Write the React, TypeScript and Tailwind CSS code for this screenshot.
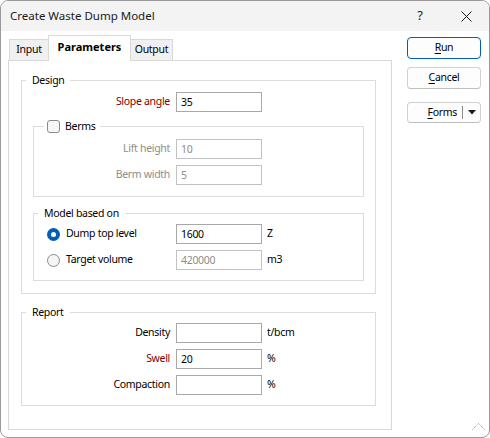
import React from "react";

const FONT = { fontFamily: '"Segoe UI", "Noto Sans", "DejaVu Sans", sans-serif' };

function Field({ value, disabled }: { value: string; disabled?: boolean }) {
  return (
    <div
      className={
        "w-[86px] h-[20px] border bg-white pl-[4px] flex items-center leading-[14px] " +
        (disabled ? "border-[#c2c2c2] text-[#8d8d8d]" : "border-[#a8a8a8] text-black")
      }
    >
      {value}
    </div>
  );
}

function Legend({ children, cls }: { children: React.ReactNode; cls: string }) {
  return <legend className={"h-[16px] leading-[16px] text-black flex items-center " + cls}>{children}</legend>;
}

export default function App() {
  return (
    <div className="w-[490px] h-[438px] bg-white text-[10.5px] tracking-[-0.3px]" style={FONT}>
      <div className="relative w-full h-full border border-[#9a9a9a] rounded-[8px] overflow-hidden flex flex-col bg-white">
        {/* Title bar */}
        <div className="h-[30px] bg-[#f3f3f3] flex items-center shrink-0">
          <div className="pl-[9px] text-[11.5px] tracking-normal text-[#1a1a1a] flex-1">Create Waste Dump Model</div>
          <div className="w-[46px] h-full flex items-center justify-center text-[13px] tracking-normal text-[#1a1a1a]">?</div>
          <div className="w-[46px] h-full flex items-center justify-center">
            <svg width="11" height="11" viewBox="0 0 11 11">
              <path d="M0.5 0.5 L10.5 10.5 M10.5 0.5 L0.5 10.5" stroke="#1a1a1a" strokeWidth="1" />
            </svg>
          </div>
        </div>

        {/* Body */}
        <div className="flex-1 flex pl-[7px] pt-[4px]">
          {/* Left: tabs */}
          <div className="w-[384px] flex flex-col">
            <div className="relative z-10 flex items-end h-[25px] pl-[1px]">
              <div className="w-[40px] h-[21px] border border-b-0 border-[#d9d9d9] bg-[#f0f0f0] flex items-center justify-center text-black">
                Input
              </div>
              <div className="-ml-px -mb-px w-[83px] h-[26px] border border-b-0 border-[#d9d9d9] bg-white flex items-center justify-center font-bold text-[11px] tracking-normal text-black pb-[2px]">
                Parameters
              </div>
              <div className="-ml-px w-[43px] h-[21px] border border-b-0 border-[#d9d9d9] bg-[#f0f0f0] flex items-center justify-center text-black">
                Output
              </div>
            </div>
            <div className="h-[370px] border border-[#d9d9d9] bg-white pt-[11px] pl-[12px]">
              {/* Design */}
              <fieldset className="w-[355px] border border-[#dcdcdc] p-0 m-0">
                <Legend cls="ml-[4px] px-[6px]">Design</Legend>
                <div className="pt-[4px] pl-[11px] pb-[12px]">
                  <div className="flex items-center h-[20px]">
                    <div className="w-[137px] mr-[6px] text-right text-[#800000]">Slope angle</div>
                    <Field value="35" />
                  </div>

                  {/* Berms */}
                  <fieldset className="mt-[6px] w-[331px] border border-[#dcdcdc] p-0 m-0">
                    <legend className="ml-[10px] pl-[3px] pr-[5px] h-[16px] leading-[16px] text-black flex items-center">
                      <span className="inline-block w-[13px] h-[13px] border border-[#8a8a8a] rounded-[3px] bg-[#f7f7f7] mr-[5px]" />
                      Berms
                    </legend>
                    <div className="pt-[5px] pb-[11px] flex flex-col gap-[6px]">
                      <div className="flex items-center h-[20px]">
                        <div className="w-[136px] mr-[6px] text-right text-[#8d8d8d]">Lift height</div>
                        <Field value="10" disabled />
                      </div>
                      <div className="flex items-center h-[20px]">
                        <div className="w-[136px] mr-[6px] text-right text-[#8d8d8d]">Berm width</div>
                        <Field value="5" disabled />
                      </div>
                    </div>
                  </fieldset>

                  {/* Model based on */}
                  <fieldset className="mt-[8px] w-[331px] border border-[#dcdcdc] p-0 m-0">
                    <Legend cls="ml-[4px] px-[6px]">Model based on</Legend>
                    <div className="pt-[3px] pb-[10px] pl-[13px] flex flex-col gap-[6px]">
                      <div className="flex items-center h-[20px]">
                        <span className="w-[13px] h-[13px] rounded-full bg-[#005fb8] flex items-center justify-center mr-[6px]">
                          <span className="w-[5px] h-[5px] rounded-full bg-white" />
                        </span>
                        <div className="w-[110px] text-black">Dump top level</div>
                        <Field value="1600" />
                        <div className="ml-[5px] text-black">Z</div>
                      </div>
                      <div className="flex items-center h-[20px]">
                        <span className="w-[13px] h-[13px] rounded-full border border-[#8a8a8a] bg-[#f5f5f5] mr-[6px]" />
                        <div className="w-[110px] text-black">Target volume</div>
                        <Field value="420000" disabled />
                        <div className="ml-[5px] text-black">m3</div>
                      </div>
                    </div>
                  </fieldset>
                </div>
              </fieldset>

              {/* Report */}
              <fieldset className="mt-[10px] w-[355px] border border-[#dcdcdc] p-0 m-0">
                <Legend cls="ml-[4px] px-[6px]">Report</Legend>
                <div className="pt-[3px] pb-[10px] flex flex-col gap-[6px]">
                  <div className="flex items-center h-[20px]">
                    <div className="w-[148px] mr-[6px] text-right text-black">Density</div>
                    <Field value="" />
                    <div className="ml-[5px] text-black">t/bcm</div>
                  </div>
                  <div className="flex items-center h-[20px]">
                    <div className="w-[148px] mr-[6px] text-right text-[#800000]">Swell</div>
                    <Field value="20" />
                    <div className="ml-[5px] text-black">%</div>
                  </div>
                  <div className="flex items-center h-[20px]">
                    <div className="w-[148px] mr-[6px] text-right text-black">Compaction</div>
                    <Field value="" />
                    <div className="ml-[5px] text-black">%</div>
                  </div>
                </div>
              </fieldset>
            </div>
          </div>

          {/* Right: buttons */}
          <div className="ml-[15px] pt-[2px] w-[74px] flex flex-col text-black">
            <div className="h-[22px] border border-[#005fb8] rounded-[4px] bg-[#fdfdfd] flex items-center justify-center">
              <span><span className="underline underline-offset-[2px]">R</span>un</span>
            </div>
            <div className="mt-[8px] h-[22px] border border-[#d0d0d0] border-b-[#bdbdbd] rounded-[4px] bg-[#fdfdfd] flex items-center justify-center">
              <span><span className="underline underline-offset-[2px]">C</span>ancel</span>
            </div>
            <div className="mt-[13px] h-[21px] border border-[#d0d0d0] border-b-[#bdbdbd] rounded-[4px] bg-[#fdfdfd] flex items-center justify-end">
              <span><span className="underline underline-offset-[2px]">F</span>orms</span>
              <span className="ml-[5px] w-px h-[13px] bg-[#8a8a8a]" />
              <span className="w-[17px] flex items-center justify-center">
                <svg width="8" height="5" viewBox="0 0 8 5">
                  <path d="M0 0 H8 L4 4.5 Z" fill="#1a1a1a" />
                </svg>
              </span>
            </div>
          </div>
        </div>

        {/* Size grip */}
        <svg className="absolute right-[4px] bottom-[7px]" width="13" height="7" viewBox="0 0 13 7">
          <path d="M0.5 6.5 L6.5 0.5 L12.5 6.5" fill="none" stroke="#8a8a8a" strokeWidth="1" strokeDasharray="1 1" />
        </svg>
      </div>
    </div>
  );
}
